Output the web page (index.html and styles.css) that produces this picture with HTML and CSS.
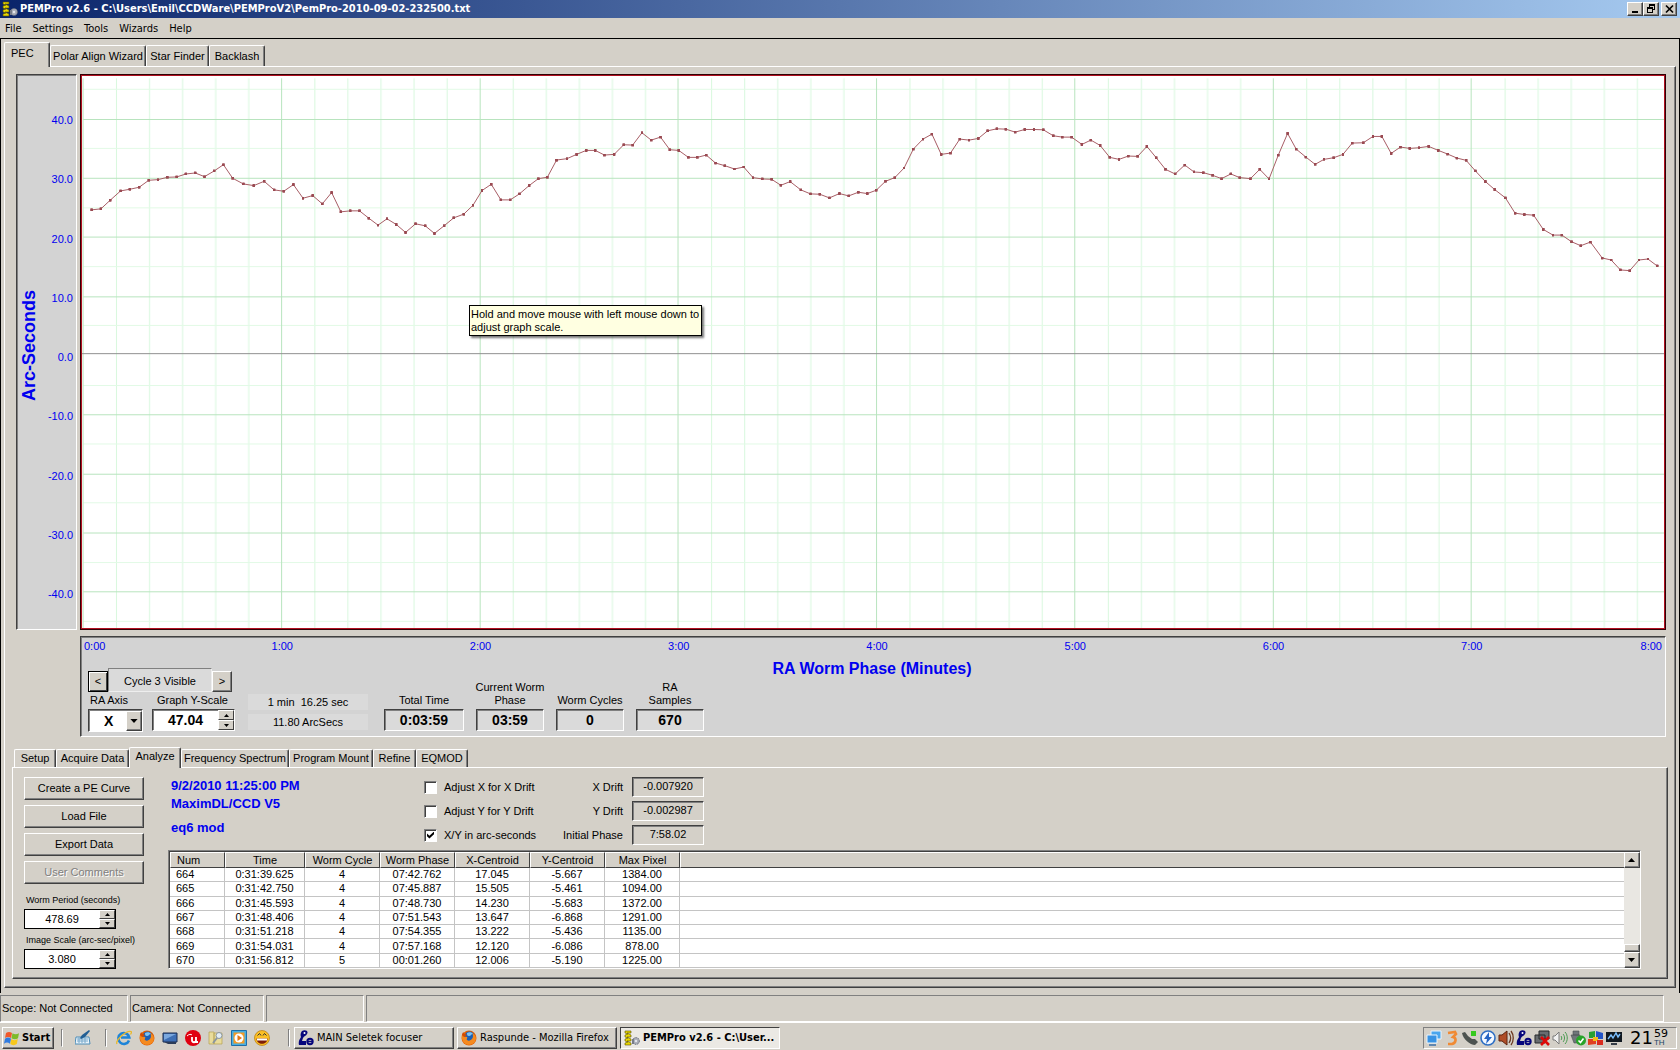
FILE: index.html
```html
<!DOCTYPE html>
<html lang="en">
<head>
<meta charset="utf-8">
<title>PEMPro v2.6</title>
<link rel="stylesheet" href="styles.css">
</head>
<body>
<!-- Shared icon symbols -->
<svg class="symbols" aria-hidden="true">
  <symbol id="i-pem" viewBox="0 0 16 16"><path d="M1 1h6v2H3l4 2v2H3l4 2v2H3l4 2v2H1v-2l3-1-3-1V9l3-1-3-1V5l3-1-3-1z" fill="#e8d800" stroke="#5a5200" stroke-width=".6"/><circle cx="12" cy="11" r="3.4" fill="#a9adb8" stroke="#666b78" stroke-dasharray="1.5 1"/><circle cx="12" cy="11" r="1.2" fill="#e4e6ec"/><path d="M8 9h2v5H8z" fill="#777c88"/></symbol>
  <symbol id="i-firefox" viewBox="0 0 16 16"><circle cx="8" cy="8" r="7.5" fill="#e66000"/><circle cx="8.500" cy="6.500" r="5" fill="#1c5fb4"/><path d="M6 3c2-1.500 5-1 6 1-2 0-2 2-4 2S6 5 6 3z" fill="#7cc3f2"/><path d="M.8 5C2 8 4 6 6 7c1 1-1 2 0 3 2 1.500 4 0 5-1 1.500-2 1-4 .5-5.500C15 5 16 9 13.500 12.500 9 17 0 15 .8 5z" fill="#f58a1f"/><path d="M1 5c0-1 .5-2 1.200-3l1 2L6 4.500 4 7z" fill="#d34a00"/></symbol>
  <symbol id="i-seletek" viewBox="0 0 16 16"><path d="M4 1c3-2 7 0 5 3-1 2-3 2-4 4l-1 3h4v4H1c-1-4 1-6 2-8-1-2 0-5 1-6z" fill="#06067c"/><circle cx="6.500" cy="3" r="1" fill="#fff"/><circle cx="12" cy="11.500" r="2.700" fill="none" stroke="#06067c" stroke-width="2"/><path d="M10 11.500h5" stroke="#06067c" stroke-width="1.500"/></symbol>
</svg>

<header class="titlebar">
  <svg class="icon16"><use href="#i-pem"/></svg>
  <h1>PEMPro v2.6 - C:\Users\Emil\CCDWare\PEMProV2\PemPro-2010-09-02-232500.txt</h1>
  <div class="winbtns">
    <button class="raised" aria-label="Minimize"><svg viewBox="0 0 11 10"><path d="M2 7h6v2H2z"/></svg></button>
    <button class="raised" aria-label="Restore"><svg viewBox="0 0 11 10"><path d="M3 0h6v6H7V5h1V2H4v1H3zM1 3h6v6H1zM2 5v3h4V5z" fill-rule="evenodd"/></svg></button>
    <button class="raised close" aria-label="Close"><svg viewBox="0 0 11 10"><path d="M2 1.500l7 7M9 1.500l-7 7" stroke="#000" stroke-width="1.700"/></svg></button>
  </div>
</header>
<nav class="menubar">
  <button>File</button><button>Settings</button><button>Tools</button><button>Wizards</button><button>Help</button>
</nav>

<main class="frame">
  <div class="tabs main-tabs" role="tablist">
    <button class="tab selected" role="tab" aria-selected="true">PEC</button>
    <button class="tab" role="tab">Polar Align Wizard</button>
    <button class="tab" role="tab">Star Finder</button>
    <button class="tab" role="tab">Backlash</button>
  </div>
  <section class="page main-page">
    <div class="chart">
      <div class="yaxis">
        <div class="ytitle"><span>Arc-Seconds</span></div>
        <ul><li>40.0</li><li>30.0</li><li>20.0</li><li>10.0</li><li>0.0</li><li>-10.0</li><li>-20.0</li><li>-30.0</li><li>-40.0</li></ul>
      </div>
      <div class="plot">
        <svg viewBox="230 228 4430 1662" preserveAspectRatio="none" role="img" aria-label="Periodic error by worm phase">
          <defs>
            <marker id="dot" markerUnits="userSpaceOnUse" markerWidth="8" markerHeight="9" refX="4" refY="4.500"><rect width="8" height="9" rx="2" fill="#9a4a52"/></marker>
            <pattern id="minor" patternUnits="userSpaceOnUse" x="233" y="235" width="555.500" height="1660">
              <path d="M93.600 0V1660M186.200 0V1660M278.800 0V1660M371.400 0V1660M464 0V1660" stroke="#d8f8de" stroke-width="2.800"/>
            </pattern>
          </defs>
          <rect x="233" y="235" width="4427" height="1655" fill="url(#minor)"/>
          <g class="grid">
            <path class="minor" d="M233 268H4660M233 446H4660M233 625H4660M233 802H4660M233 979H4660M233 1160H4660M233 1336H4660M233 1513H4660M233 1693H4660M233 1870H4660"/>
            <path class="major" d="M233 359H4660M233 536H4660M233 713H4660M233 893H4660M233 1248H4660M233 1427H4660M233 1604H4660M233 1781H4660"/>
            <path class="major" d="M233 235V1890M789 235V1890M1345 235V1890M1899 235V1890M2455 235V1890M3010 235V1890M3566 235V1890M4120 235V1890"/>
            <path class="zero" d="M230 1064H4660"/>
          </g>
          <g class="curve">
            <polyline points="257,631 283,628 309,602 338,574 364,569 390,563 417,542 443,540 469,533 495,532 521,523 547,520 573,531 600,514 626,495 652,536 682,553 711,558 740,545 768,571 795,575 822,555 849,596 876,588 903,613 929,579 955,637 981,634 1007,634 1033,656 1059,677 1084,658 1110,675 1136,699 1164,673 1191,679 1217,702 1244,679 1271,655 1299,644 1325,617 1350,573 1376,554 1403,601 1429,601 1455,583 1482,558 1508,537 1533,533 1559,481"/>
            <polyline transform="translate(1568 180)" points="-9,301 20,297 47,284 74,272 99,272 125,286 152,284 179,255 204,256 230,219 256,241 282,232 308,270 333,272 360,293 385,293 410,286 436,310 462,318 489,328 515,322 541,354 567,358 593,359 619,377 645,366 675,391 702,403 728,404 755,415 783,402 809,409 836,398 861,402 886,392 912,365 938,354 964,325 990,268 1017,238 1042,223 1068,284 1094,280 1120,238 1146,241 1172,236 1198,213 1224,207 1249,208 1275,217 1302,209 1328,209 1354,210 1382,228 1407,232 1433,232 1462,254 1487,241 1513,257 1540,293 1566,299"/>
            <polyline transform="translate(3136 0)" points="-2,479 24,469 50,470 76,440 102,474 128,509 155,523 182,496 208,517 234,519 260,527 285,537 311,523 336,534 366,537 392,509 418,538 444,466 470,401 494,448 521,472 547,494 572,479 599,474 625,464 651,430 682,429 709,410 734,410 760,461 786,442 812,446 838,444 865,440 892,452 918,463 944,475 970,482 996,514 1024,546 1050,570 1080,595 1107,641 1133,645 1159,647 1186,690 1213,707 1238,707 1265,727 1291,739 1318,728 1351,776 1376,782 1402,812 1428,814 1454,782 1479,779 1505,800"/>
          </g>
        </svg>
        <div class="tooltip" role="tooltip">Hold and move mouse with left mouse down to<br>adjust graph scale.</div>
      </div>
      <div class="xaxis">
        <ul><li>0:00</li><li>1:00</li><li>2:00</li><li>3:00</li><li>4:00</li><li>5:00</li><li>6:00</li><li>7:00</li><li>8:00</li></ul>
        <h2>RA Worm Phase (Minutes)</h2>
        <div class="controls">
          <div class="left-controls">
            <div class="cycle">
              <button class="raised default" aria-label="Previous cycle">&lt;</button><output>Cycle 3 Visible</output><button class="raised" aria-label="Next cycle">&gt;</button>
            </div>
            <div class="pair">
              <div class="field axis"><label for="axis">RA Axis</label>
                <div class="combo"><select id="axis"><option>X</option><option>Y</option></select><span class="raised drop"><svg viewBox="0 0 9 5"><path d="M0 0h9L4.500 5z"/></svg></span></div></div>
              <div class="field yscale"><label for="yscale">Graph Y-Scale</label>
                <div class="spin sunken"><input id="yscale" value="47.04"><span class="arrows"><button class="raised" aria-label="Up"><svg viewBox="0 0 5 3"><path d="M0 3h5L2.500 0z"/></svg></button><button class="raised" aria-label="Down"><svg viewBox="0 0 5 3"><path d="M0 0h5L2.500 3z"/></svg></button></span></div></div>
            </div>
          </div>
          <div class="cursor"><span>1 min&nbsp; 16.25 sec</span><span>11.80 ArcSecs</span></div>
          <div class="read wide"><label for="tt">Total Time</label><output id="tt">0:03:59</output></div>
          <div class="read"><label for="cw">Current Worm Phase</label><output id="cw">03:59</output></div>
          <div class="read"><label for="wc">Worm Cycles</label><output id="wc">0</output></div>
          <div class="read narrow"><label for="rs">RA<br>Samples</label><output id="rs">670</output></div>
        </div>
      </div>
    </div>

    <div class="tabs sub-tabs" role="tablist">
      <button class="tab" role="tab">Setup</button>
      <button class="tab" role="tab">Acquire Data</button>
      <button class="tab selected" role="tab" aria-selected="true">Analyze</button>
      <button class="tab" role="tab">Frequency Spectrum</button>
      <button class="tab" role="tab">Program Mount</button>
      <button class="tab" role="tab">Refine</button>
      <button class="tab" role="tab">EQMOD</button>
    </div>
    <section class="page analyze">
      <div class="actions">
        <button class="raised">Create a PE Curve</button>
        <button class="raised">Load File</button>
        <button class="raised">Export Data</button>
        <button class="raised" disabled>User Comments</button>
        <label for="period">Worm Period (seconds)</label>
        <div class="spin flat"><input id="period" value="478.69"><span class="arrows"><button class="raised" aria-label="Up"><svg viewBox="0 0 5 3"><path d="M0 3h5L2.500 0z"/></svg></button><button class="raised" aria-label="Down"><svg viewBox="0 0 5 3"><path d="M0 0h5L2.500 3z"/></svg></button></span></div>
        <label for="scale">Image Scale (arc-sec/pixel)</label>
        <div class="spin flat"><input id="scale" value="3.080"><span class="arrows"><button class="raised" aria-label="Up"><svg viewBox="0 0 5 3"><path d="M0 3h5L2.500 0z"/></svg></button><button class="raised" aria-label="Down"><svg viewBox="0 0 5 3"><path d="M0 0h5L2.500 3z"/></svg></button></span></div>
      </div>
      <div class="data">
        <div class="summary">
          <div class="session"><p>9/2/2010 11:25:00 PM</p><p>MaximDL/CCD V5</p><p class="mount">eq6 mod</p></div>
          <div class="checks">
            <label><input type="checkbox">Adjust X for X Drift</label>
            <label><input type="checkbox">Adjust Y for Y Drift</label>
            <label><input type="checkbox" checked>X/Y in arc-seconds</label>
          </div>
          <div class="drifts">
            <label for="xd">X Drift</label><output id="xd">-0.007920</output>
            <label for="yd">Y Drift</label><output id="yd">-0.002987</output>
            <label for="ip">Initial Phase</label><output id="ip">7:58.02</output>
          </div>
        </div>
        <div class="listbox">
          <table>
            <colgroup><col class="c-num"><col class="c-time"><col class="c-data"><col class="c-data"><col class="c-data"><col class="c-data"><col class="c-data"><col></colgroup>
            <thead><tr><th>Num</th><th>Time</th><th>Worm Cycle</th><th>Worm Phase</th><th>X-Centroid</th><th>Y-Centroid</th><th>Max Pixel</th><th></th></tr></thead>
            <tbody>
              <tr><td>664</td><td>0:31:39.625</td><td>4</td><td>07:42.762</td><td>17.045</td><td>-5.667</td><td>1384.00</td><td></td></tr>
              <tr><td>665</td><td>0:31:42.750</td><td>4</td><td>07:45.887</td><td>15.505</td><td>-5.461</td><td>1094.00</td><td></td></tr>
              <tr><td>666</td><td>0:31:45.593</td><td>4</td><td>07:48.730</td><td>14.230</td><td>-5.683</td><td>1372.00</td><td></td></tr>
              <tr><td>667</td><td>0:31:48.406</td><td>4</td><td>07:51.543</td><td>13.647</td><td>-6.868</td><td>1291.00</td><td></td></tr>
              <tr><td>668</td><td>0:31:51.218</td><td>4</td><td>07:54.355</td><td>13.222</td><td>-5.436</td><td>1135.00</td><td></td></tr>
              <tr><td>669</td><td>0:31:54.031</td><td>4</td><td>07:57.168</td><td>12.120</td><td>-6.086</td><td>878.00</td><td></td></tr>
              <tr><td>670</td><td>0:31:56.812</td><td>5</td><td>00:01.260</td><td>12.006</td><td>-5.190</td><td>1225.00</td><td></td></tr>
            </tbody>
          </table>
          <div class="scrollbar">
            <button class="raised" aria-label="Scroll up"><svg viewBox="0 0 7 4"><path d="M0 4h7L3.500 0z"/></svg></button>
            <div class="track"><div class="thumb raised"></div></div>
            <button class="raised" aria-label="Scroll down"><svg viewBox="0 0 7 4"><path d="M0 0h7L3.500 4z"/></svg></button>
          </div>
        </div>
      </div>
    </section>
  </section>
</main>

<div class="statusbar">
  <span class="s1">Scope: Not Connected</span><span class="s2">Camera: Not Connected</span><span class="s3"></span><span class="s4"></span>
</div>

<footer class="taskbar">
  <button class="start raised"><svg viewBox="0 0 16 16"><path d="M2 3c2-1.500 4-1.500 6 0L7 8C5 6.500 3 6.500 1 8z" fill="#f0592b"/><path d="M8.500 3.200c2 1.500 4 1.500 6.500 0l-1 5c-2 1.500-4.500 1.500-6.500 0z" fill="#7dbb29"/><path d="M1 8.700c2-1.500 4-1.500 6 0l-1 5c-2-1.500-4-1.500-6 0z" fill="#2f7be0"/><path d="M7.300 9c2 1.500 4 1.500 6.500 0l-1 5c-2 1.500-4.500 1.500-6.500 0z" fill="#f7c81c"/></svg>Start</button>
  <i class="sep"></i>
  <div class="quick one">
    <svg viewBox="0 0 16 16"><path d="M1 7h13l1 7H0z" fill="#e9f3fa" stroke="#4d8db8"/><path d="M2 9h11M2 11h11M4 7v6M7 7v6M10 7v6" stroke="#78a9cb"/><path d="M5 8l2-3 7-5 1 1-5 6-4 2z" fill="#225f94"/></svg>
  </div>
  <i class="sep"></i>
  <div class="quick">
    <svg viewBox="0 0 16 16"><path d="M13 10.500a5.500 5.500 0 1 1 .3-3H5" fill="none" stroke="#1e84d8" stroke-width="2.600"/><path d="M1 14C-1 11 10 0 15 1.500c1 .5 0 2-.5 3" fill="none" stroke="#e9b92b" stroke-width="1.300"/></svg>
    <svg viewBox="0 0 16 16"><use href="#i-firefox"/></svg>
    <svg viewBox="0 0 16 16"><path d="M1 3h14v9H1z" fill="#3e6fb5" stroke="#1d2f52"/><path d="M2 4h12L2 10z" fill="#7ba8de"/><path d="M2 12h12v2H6z" fill="#2c3c58"/></svg>
    <svg viewBox="0 0 16 16"><circle cx="8" cy="8" r="8" fill="#e00010"/><path d="M7 7v3c0 3 4 3 4 0V7M11 9v3h2" fill="none" stroke="#fff" stroke-width="1.800"/><path d="M2 6c2-2 4-2 5-1" fill="none" stroke="#fff"/></svg>
    <svg viewBox="0 0 16 16"><path d="M1 2h5v12H1zM6 3h8v11H6z" fill="#e9dc9b" stroke="#b6a250" stroke-width=".7"/><circle cx="11" cy="5.500" r="3" fill="#e3edf5" stroke="#8a96a0"/><path d="M9 8l-4 5" stroke="#8a96a0" stroke-width="2"/></svg>
    <svg viewBox="0 0 16 16"><path d="M.5.500h15v15H.5z" fill="#47b0e4" stroke="#1f6ea8"/><path d="M2.500 2.500h11v11h-11z" fill="#f59a25"/><circle cx="8" cy="8" r="4.500" fill="#fff"/><path d="M6.500 5l4.500 3-4.500 3z" fill="#e87510"/></svg>
    <svg viewBox="0 0 16 16"><circle cx="8" cy="8" r="7.500" fill="#fbbf24" stroke="#b87a10" stroke-width=".7"/><path d="M2.500 8.500h11c0 7-11 7-11 0z" fill="#7c1d08"/><path d="M3 8.500h10v2H3z" fill="#fff"/><path d="M3.500 5.500l2-2 1.500 2M9 5.500l1.500-2 2 2" fill="none" stroke="#333"/></svg>
  </div>
  <i class="sep last"></i>
  <div class="tasks">
    <button class="raised"><svg viewBox="0 0 16 16"><use href="#i-seletek"/></svg>MAIN Seletek focuser</button>
    <button class="raised"><svg viewBox="0 0 16 16"><use href="#i-firefox"/></svg>Raspunde - Mozilla Firefox</button>
    <button class="active"><svg viewBox="0 0 16 16"><use href="#i-pem"/></svg>PEMPro v2.6 - C:\User...</button>
  </div>
  <div class="tray">
    <svg viewBox="0 0 16 16"><path d="M5 1h10v8H5z" fill="#4aa6ee" stroke="#e9f4fd"/><path d="M1 5h10v8H1z" fill="#3893e4" stroke="#e9f4fd"/><path d="M3 15h7" stroke="#3a6fa8" stroke-width="1.500"/></svg>
    <svg viewBox="0 0 16 16"><path d="M4 3l7-1 1 2-3 3c4 1 3 6-1 7H4" fill="none" stroke="#f08a34" stroke-width="2.600"/></svg>
    <svg viewBox="0 0 16 16"><path d="M0 3l3-1 3 4 4 3 3 0 3 3-3 3c-5 0-12-6-13-12z" fill="#4d5350"/><path d="M9 1h5v5H9z" fill="#35c91e"/></svg>
    <svg viewBox="0 0 16 16"><circle cx="8" cy="8" r="7" fill="#f3f8ff" stroke="#2f6fc4" stroke-width="1.600"/><path d="M9 2L4 9h3l-1 5 6-7H9z" fill="#2564c4"/></svg>
    <svg viewBox="0 0 16 16"><path d="M1 5h3l5-4v14l-5-4H1z" fill="#b04e28" stroke="#5e2410"/><path d="M11 3c2 3 2 7 0 10M13 1c3 4 3 10 0 14" fill="none" stroke="#6d3a22" stroke-width="1.300"/></svg>
    <svg viewBox="0 0 16 16"><use href="#i-seletek"/></svg>
    <svg viewBox="0 0 16 16"><path d="M5 1h10v8H5zM1 5h10v8H1z" fill="#686c70" stroke="#26282a"/><path d="M7 7l8 8M15 7l-8 8" stroke="#dd0808" stroke-width="2.600"/></svg>
    <svg viewBox="0 0 16 16"><path d="M1 6h2l4-4v12l-4-4H1z" fill="#f2f2f2" stroke="#7b7b7b"/><path d="M9 6c1 1 1 3 0 4M11 4c2 2 2 6 0 8M13 2c3 3 3 9 0 12" fill="none" stroke="#4a9a50"/></svg>
    <svg viewBox="0 0 16 16"><path d="M3 1h6v4H3zM1 5h9v8H4z" fill="#70767a" stroke="#4b5053" stroke-width=".6"/><circle cx="11" cy="10.500" r="5" fill="#28a428"/><path d="M8.500 10.500l2 2 3-4" fill="none" stroke="#fff" stroke-width="1.600"/></svg>
    <svg viewBox="0 0 16 16"><path d="M1 2l6-1v7H1z" fill="#28a032"/><path d="M8 1l7 2v6H8z" fill="#2254c8"/><path d="M0 9h8v5l-8 1z" fill="#e04020"/><path d="M5 7h5v4H5z" fill="#f2bd1a"/><path d="M9 10h6v5H9z" fill="#d92c20"/></svg>
    <svg viewBox="0 0 16 16"><path d="M0 2h16v10H0z" fill="#101820"/><path d="M2 9l3-4 2 3 3-5 2 4 2-3" fill="none" stroke="#7cc0ff" stroke-width="1.400"/><path d="M5 13h6v2H5z" fill="#343c46"/></svg>
    <div class="clock"><b>21</b><span>59<small>TH</small></span></div>
  </div>
</footer>
</body>
</html>
```
FILE: styles.css
```css
:root {
  --face: #d4d0c8;
  --panel: #d3d3d3;
  --dark: #404040;
  --shadow: #808080;
  --blue: #0000f0;
  --tahoma: "DejaVu Sans Condensed", "DejaVu Sans", sans-serif;
  --sans: "Liberation Sans", Arial, sans-serif;
}
* { box-sizing: border-box; }
body {
  margin: 0;
  min-height: 100vh;
  display: flex;
  flex-direction: column;
  background: var(--face);
  color: #000;
  font: 11px/13px var(--sans);
}
button, input, select { font: inherit; color: inherit; margin: 0; padding: 0; border: 0; border-radius: 0; background: none; }
ul, p, h1, h2 { margin: 0; padding: 0; list-style: none; }
svg { display: block; }
.symbols { position: absolute; width: 0; height: 0; }
.icon16 { width: 16px; height: 16px; }

.raised {
  background: var(--face);
  border: 1px solid;
  border-color: #fff var(--dark) var(--dark) #fff;
  box-shadow: inset -1px -1px 0 var(--shadow);
}
.sunken, output {
  border: 1px solid;
  border-color: var(--dark) #fff #fff var(--dark);
  box-shadow: inset 1px 1px 0 var(--shadow);
}

/* Title bar and menu */
.titlebar {
  display: flex;
  align-items: center;
  gap: 2px;
  height: 18px;
  padding: 0 3px 0 2px;
  background: linear-gradient(90deg, #0a246a, #a6caf0);
  color: #fff;
}
.titlebar h1 { flex: 1; font: bold 11px/16px var(--tahoma); white-space: nowrap; }
.winbtns { display: flex; }
.winbtns button { width: 16px; height: 14px; padding: 1px 2px; }
.winbtns svg { width: 11px; height: 10px; }
.winbtns .close { margin-left: 2px; }
.menubar { display: flex; gap: 11px; height: 20px; padding: 1px 5px 0; font: 11px/19px var(--tahoma); }

/* Tabs */
.frame {
  flex: 1;
  display: flex;
  flex-direction: column;
  border: 1px solid #000;
  border-bottom: 0;
  padding: 3px 3px 5px;
}
.tabs { display: flex; align-items: flex-end; position: relative; z-index: 1; }
.tab {
  height: 21px;
  padding: 0;
  text-align: center;
  white-space: nowrap;
  border: 1px solid;
  border-color: #fff var(--dark) transparent #fff;
  border-radius: 2px 2px 0 0;
  border-bottom: 0;
  box-shadow: inset -1px 0 0 var(--shadow);
}
.tab.selected { height: 25px; margin-bottom: -1px; padding-bottom: 4px; background: var(--face); }
.main-tabs .tab:nth-child(1) { width: 46px; text-align: left; padding-left: 6px; }
.main-tabs .tab:nth-child(2) { width: 96px; }
.main-tabs .tab:nth-child(3) { width: 63px; }
.main-tabs .tab:nth-child(4) { width: 56px; }
.sub-tabs { margin: 10px 0 0 2px; }
.sub-tabs .tab { height: 18px; }
.sub-tabs .selected { height: 21px; }
.sub-tabs .tab:nth-child(1) { width: 42px; }
.sub-tabs .tab:nth-child(2) { width: 73px; }
.sub-tabs .tab:nth-child(3) { width: 52px; }
.sub-tabs .tab:nth-child(4) { width: 108px; }
.sub-tabs .tab:nth-child(5) { width: 84px; }
.sub-tabs .tab:nth-child(6) { width: 43px; }
.sub-tabs .tab:nth-child(7) { width: 52px; }
.page {
  border: 1px solid;
  border-color: #fff var(--dark) var(--dark) #fff;
  box-shadow: inset -1px -1px 0 var(--shadow);
}
.main-page { flex: 1; display: flex; flex-direction: column; padding: 7px 7px 8px; }

/* Chart */
.chart {
  flex: 1;
  display: grid;
  grid-template: minmax(240px, 1fr) auto / 61px 1fr;
  gap: 6px 3px;
  margin: 0 2px 0 4px;
}
.yaxis, .xaxis {
  background: var(--panel);
  border: 1px solid;
  border-color: var(--dark) #fff #fff var(--dark);
  box-shadow: inset 1px 1px 0 var(--shadow);
  color: var(--blue);
}
.yaxis { display: flex; justify-content: space-between; }
.ytitle { width: 24px; display: flex; align-items: center; justify-content: center; padding-bottom: 12px; }
.ytitle span { writing-mode: vertical-rl; transform: rotate(180deg); font: bold 18px/22px var(--sans); white-space: nowrap; }
.yaxis ul { display: flex; flex-direction: column; justify-content: space-between; padding: 38px 3px 28px 0; text-align: right; line-height: 14px; }
.plot { position: relative; background: #fff; border: 1px solid #300004; min-width: 0; }
.plot > svg { position: absolute; inset: 0; width: 100%; height: 100%; border: 1px solid #b01020; }
.grid path { fill: none; shape-rendering: crispEdges; vector-effect: non-scaling-stroke; stroke-width: 1px; }
.grid .minor { stroke: #e2fae6; }
.grid .major { stroke: #b8e4be; }
.grid .zero { stroke: #909090; }
.curve polyline { fill: none; stroke: #a85e66; stroke-width: 1px; vector-effect: non-scaling-stroke; marker: url(#dot); }
.tooltip {
  position: absolute;
  left: 388px;
  top: 230px;
  min-width: 233px;
  padding: 2px 1px 1px;
  background: #ffffe1;
  border: 1px solid #000;
  box-shadow: 2px 2px 2px #0008;
  white-space: nowrap;
}
.xaxis { grid-column: 2; padding-bottom: 4px; }
.xaxis ul {
  display: grid;
  grid-template-columns: 1fr repeat(7, 2fr) 1fr;
  margin: 2px -5px 0 3px;
  text-align: center;
  line-height: 14px;
}
.xaxis li:first-child { text-align: left; }
.xaxis li:last-child { text-align: right; padding-right: 8px; }
.xaxis h2 { font: bold 16px/20px var(--sans); text-align: center; margin: 6px 2px -11px 0; }
.controls { display: flex; align-items: flex-end; color: #000; padding-left: 7px; }
.controls label { display: block; text-align: center; }
.left-controls { width: 160px; }
.cycle { display: flex; align-items: flex-end; }
.cycle button { width: 20px; height: 21px; }
.cycle .default { outline: 1px solid #000; outline-offset: -1px; border-color: #000; box-shadow: inset 1px 1px 0 #fff, inset -1px -1px 0 var(--dark); }
.cycle output { width: 104px; height: 24px; padding-top: 6px; text-align: center; background: #dadada; border-color: var(--shadow) #eee #eee var(--shadow); box-shadow: none; }
.pair { display: flex; gap: 9px; margin-top: 2px; }
.pair label { margin-bottom: 2px; }
.axis { width: 55px; }
.axis label { padding-right: 13px; }
.combo { position: relative; height: 23px; background: #fff; border: 1px solid; border-color: var(--dark) #fff #fff var(--dark); box-shadow: inset 1px 1px 0 var(--shadow); }
.combo select { appearance: none; width: 100%; height: 21px; padding-left: 15px; font: bold 14px/20px var(--sans); }
.drop { position: absolute; top: 1px; right: 0; width: 16px; height: 20px; padding: 7px 3px; pointer-events: none; }
.drop svg { width: 8px; height: 4px; }
.yscale { width: 83px; }
.yscale label { padding-right: 2px; }
.spin { display: flex; background: #fff; }
.spin input { flex: 1; min-width: 0; text-align: center; }
.arrows { width: 16px; display: flex; flex-direction: column; }
.arrows button { flex: 1; display: flex; align-items: center; justify-content: center; box-shadow: none; }
.arrows svg { width: 5px; height: 3px; }
.yscale .spin { height: 22px; margin-bottom: 1px; }
.yscale input { font: bold 14px/18px var(--sans); }
.cursor { display: grid; gap: 4px; width: 120px; margin-right: 16px; padding-bottom: 2px; }
.cursor span { background: #dadada; height: 16px; line-height: 16px; text-align: center; }
.read { width: 68px; margin: 0 12px 1px 0; }
.read.wide { width: 80px; }
.read label { margin: 0 -2px 2px; }
.read output { display: block; height: 22px; font: bold 14px/20px var(--sans); text-align: center; background: #dadada; }

/* Analyze page */
.analyze { display: flex; gap: 24px; padding: 9px 26px 9px 11px; }
.actions { flex: 0 0 120px; display: flex; flex-direction: column; }
.actions > button { height: 23px; margin-bottom: 5px; }
.actions > button:disabled { color: var(--shadow); text-shadow: 1px 1px 0 #fff; }
.actions label { font: 9px/12px var(--sans); white-space: nowrap; padding-left: 2px; margin: 4px 0 3px; }
.actions > button + label { margin-top: 5px; }
.flat { width: 92px; height: 20px; border: 1px solid #000; }
.flat + label { margin-top: 5px; }
.data { flex: 1; min-width: 0; display: flex; flex-direction: column; gap: 5px; }
.summary { display: flex; }
.session { width: 256px; padding-left: 3px; color: var(--blue); font: bold 13px/18px var(--sans); }
.mount { margin-top: 6px; }
.checks { width: 160px; display: flex; flex-direction: column; gap: 4px; }
.checks label { display: flex; align-items: center; gap: 7px; height: 20px; }
.checks input {
  appearance: none;
  width: 13px;
  height: 13px;
  background: #fff;
  border: 1px solid;
  border-color: var(--shadow) #fff #fff var(--shadow);
  box-shadow: inset 1px 1px 0 var(--dark);
  display: grid;
  place-items: center;
}
.checks input:checked::before { content: ""; width: 7px; height: 7px; background: #000; clip-path: polygon(0 30%, 35% 62%, 100% 0, 100% 40%, 35% 100%, 0 68%); }
.drifts { display: grid; grid-template-columns: 39px 72px; gap: 4px 9px; text-align: center; }
.drifts label { justify-self: end; white-space: nowrap; line-height: 20px; }
.drifts output { height: 20px; line-height: 17px; }
.listbox { flex: 1; display: flex; background: #fff; border: 1px solid; border-color: var(--shadow) #fff #fff var(--shadow); box-shadow: inset 1px 1px 0 var(--dark); padding: 1px 0 0 1px; }
table { flex: 1; table-layout: fixed; border-collapse: separate; border-spacing: 0; text-align: center; width: 100%; }
.c-num { width: 55px; }
.c-time { width: 80px; }
.c-data { width: 75px; }
th { height: 16px; padding: 0; font-weight: normal; background: var(--face); border: 1px solid; border-color: #fff var(--dark) var(--dark) #fff; }
th:last-child { border-right: 0; }
td { height: 14px; padding: 0; border: 1px solid #c4c4c4; border-width: 0 1px 1px 0; }
td:last-child { border-right: 0; }
th:first-child, td:first-child { text-align: left; padding-left: 6px; }
.scrollbar { flex: 0 0 16px; display: flex; flex-direction: column; }
.scrollbar button { height: 16px; padding: 5px 3px; }
.scrollbar svg { width: 7px; height: 4px; }
.track { flex: 1; display: flex; flex-direction: column; justify-content: flex-end; background: #e9e7e2; }
.thumb { height: 8px; }

/* Status bar */
.statusbar { display: flex; gap: 2px; margin: 2px 16px 0 0; height: 27px; }
.statusbar span { border: 1px solid; border-color: var(--shadow) #fff #fff var(--shadow); padding: 6px 1px; }
.s1 { width: 128px; }
.s2 { width: 134px; }
.s3 { width: 98px; }
.s4 { flex: 1; }

/* Taskbar */
.taskbar { display: flex; align-items: center; height: 28px; padding: 2px 3px 0 2px; border-top: 1px solid #fff; font: 11px/18px var(--tahoma); }
.taskbar svg { width: 16px; height: 16px; flex: none; }
.start { display: flex; align-items: center; gap: 2px; width: 52px; height: 22px; padding-left: 1px; font-weight: bold; }
.sep { width: 2px; height: 18px; border: 1px solid; border-color: var(--shadow) #fff #fff var(--shadow); margin: 0 9px 0 7px; }
.sep.last { margin: 0 4px 0 18px; }
.quick { display: flex; gap: 7px; }
.quick.one { margin: 0 7px 0 3px; }
.tasks { display: flex; gap: 3px; flex: 1; }
.tasks button { width: 160px; height: 22px; display: flex; align-items: center; gap: 3px; padding: 0 3px; white-space: nowrap; overflow: hidden; }
.tasks .active { font-weight: bold; background: #ebe9e4; border: 1px solid; border-color: var(--dark) #fff #fff var(--dark); }
.tray { display: flex; align-items: center; gap: 2px; width: 254px; height: 22px; padding: 0 2px; border: 1px solid; border-color: var(--shadow) #fff #fff var(--shadow); }
.clock { flex: 1; display: flex; justify-content: center; align-items: center; gap: 1px; }
.clock b { font: 18px/20px "DejaVu Sans", sans-serif; }
.clock span { font: 11px/10px "DejaVu Sans", sans-serif; }
.clock small { display: block; font: 8px/8px var(--sans); color: #246; }
```
